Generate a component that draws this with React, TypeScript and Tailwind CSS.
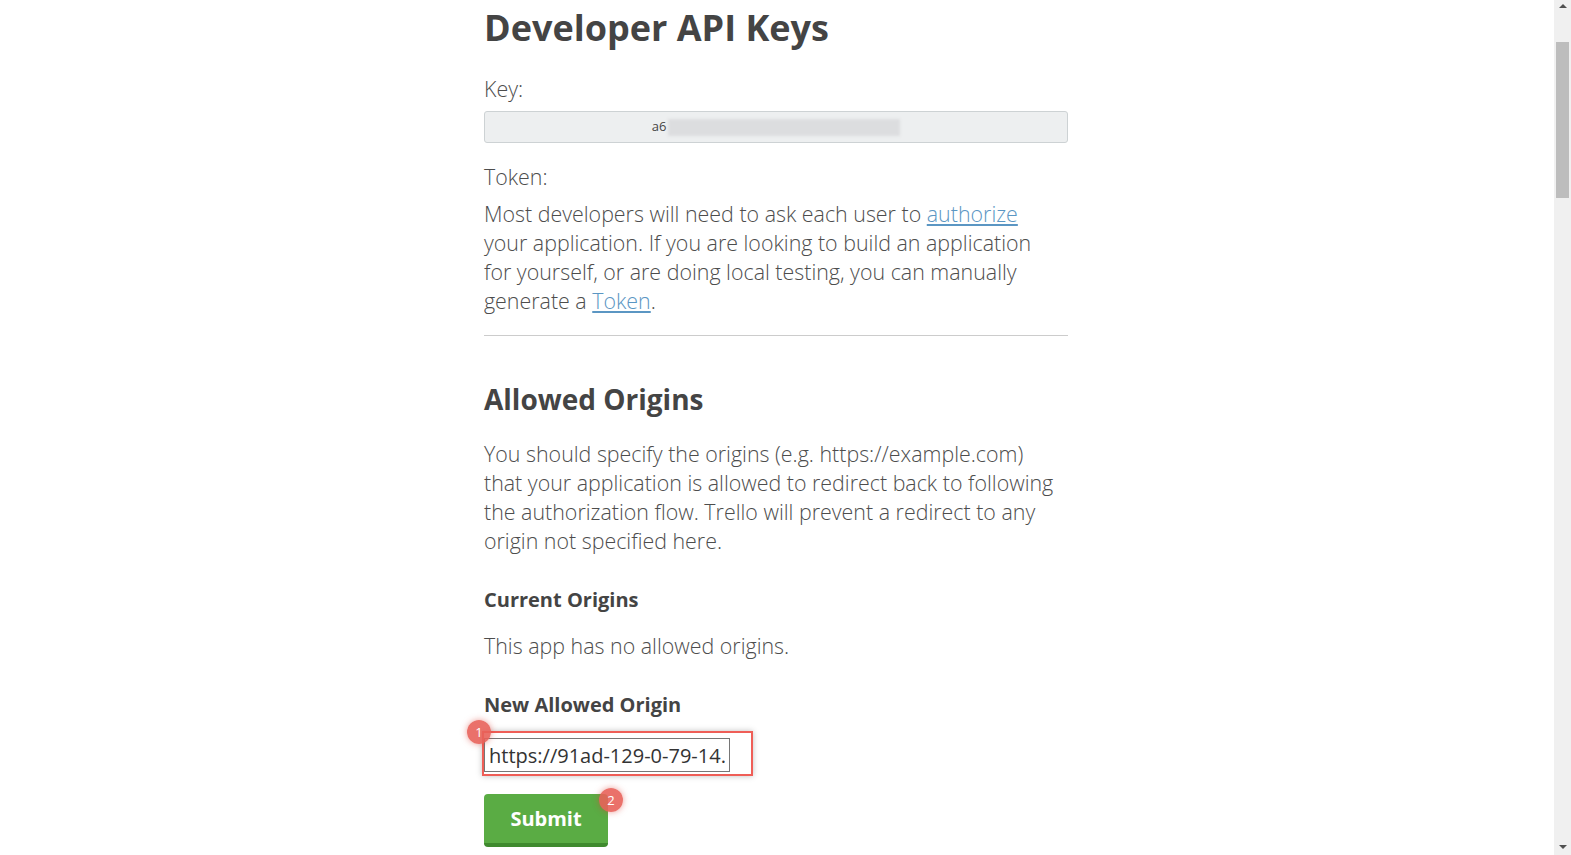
import React from 'react';

const font = { fontFamily: '"Open Sans", "Noto Sans", sans-serif' };

const Badge = ({ n, className }: { n: string; className: string }) => (
  <span
    className={`absolute flex h-6 w-6 items-center justify-center rounded-full bg-[#e8625a]/90 text-[13px] leading-none text-white shadow-[0_0_6px_rgba(220,60,50,0.5)] ${className}`}
  >
    {n}
  </span>
);

const Scrollbar = () => (
  <div className="flex h-[855px] w-[17px] shrink-0 flex-col items-center bg-[#f0f0f0]">
    <div className="mt-[4px] h-0 w-0 border-x-[4px] border-b-[4px] border-x-transparent border-b-[#505050]" />
    <div className="mt-[34px] h-[156px] w-[13px] bg-[#bdbdbd]" />
    <div className="flex-1" />
    <div className="mb-[6px] h-0 w-0 border-x-[4px] border-t-[4px] border-x-transparent border-t-[#505050]" />
  </div>
);

export default function App() {
  return (
    <div className="flex h-[855px] w-full overflow-hidden bg-white" style={font}>
      <main className="flex-1 pl-[484px] pt-[6px] text-[#4d4d4d]">
        <div className="w-[584px]">
          <h1 className="text-[36px] font-bold leading-[44px] text-[#444]">Developer API Keys</h1>

          <p className="mt-[24px] text-[21.4px] font-light leading-[29px]">Key:</p>
          <div className="mt-[8px] flex h-[32px] items-center justify-center rounded-[3px] border border-[#cdd2d4] bg-[#edeff0] text-[13px] text-[#444]">
            <span>a6</span>
            <span className="ml-[2px] h-[17px] w-[232px] bg-[#dcdddf] blur-[1.5px]" />
          </div>

          <p className="mt-[19px] text-[21.4px] font-light leading-[29px]">Token:</p>
          <p className="mt-[8px] whitespace-nowrap text-[21.4px] font-light leading-[29px]">
            Most developers will need to ask each user to{' '}
            <a href="#" className="text-[#5b96c3] underline">authorize</a>
            <br />
            your application. If you are looking to build an application
            <br />
            for yourself, or are doing local testing, you can manually
            <br />
            generate a <a href="#" className="text-[#5b96c3] underline">Token</a>.
          </p>

          <hr className="mt-[20px] border-t border-[#cccccc]" />

          <h2 className="mt-[45px] text-[28px] font-bold leading-[36px] text-[#444]">Allowed Origins</h2>
          <p className="mt-[22px] whitespace-nowrap text-[21.4px] font-light leading-[29px]">
            You should specify the origins (e.g. https://example.com)
            <br />
            that your application is allowed to redirect back to following
            <br />
            the authorization flow. Trello will prevent a redirect to any
            <br />
            origin not specified here.
          </p>

          <h3 className="mt-[30px] text-[20px] font-bold leading-[29px] text-[#444]">Current Origins</h3>
          <p className="mt-[17px] text-[21.4px] font-light leading-[29px]">This app has no allowed origins.</p>

          <h3 className="mt-[30px] text-[20px] font-bold leading-[29px] text-[#444]">New Allowed Origin</h3>

          <div className="relative mt-[19px] w-[246px]">
            <input
              readOnly
              value="https://91ad-129-0-79-14.ngrok.io"
              className="h-[34px] w-[246px] border border-[#767676] bg-white px-[4px] text-[20px] text-[#333] outline-none"
              style={font}
            />
            <div className="pointer-events-none absolute left-[-2px] top-[-7px] h-[45px] w-[271px] border-2 border-[#ef5e57] shadow-[0_0_6px_rgba(0,0,0,0.25)]" />
            <Badge n="1" className="left-[-17px] top-[-18px]" />
          </div>

          <div className="relative mt-[22px] w-[124px]">
            <button className="h-[53px] w-[124px] rounded-[4px] border-b-[4px] border-[#3f8a2e] bg-[#5aac44] text-[20px] font-bold text-white">
              Submit
            </button>
            <Badge n="2" className="left-[115px] top-[-6px]" />
          </div>
        </div>
      </main>
      <Scrollbar />
    </div>
  );
}
